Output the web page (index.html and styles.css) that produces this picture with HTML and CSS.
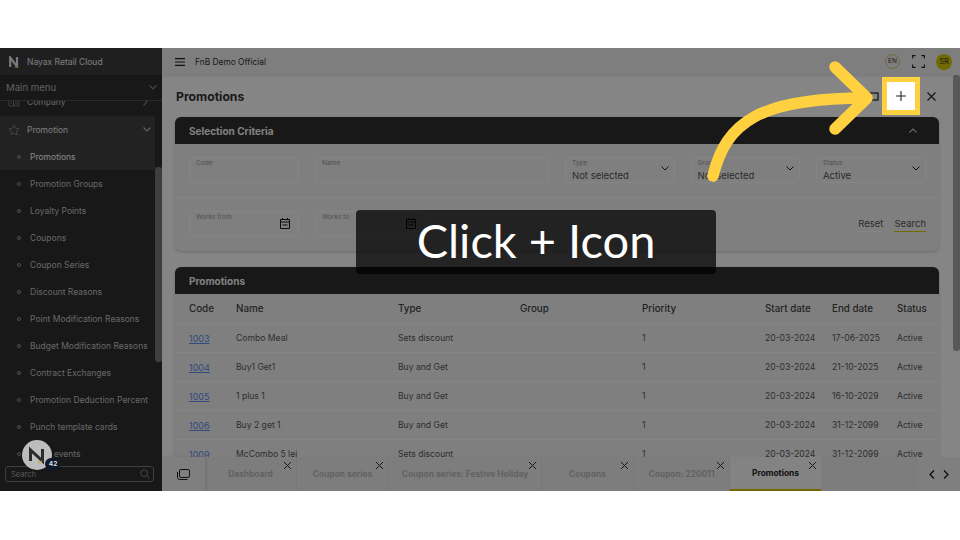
FILE: index.html
```html
<!DOCTYPE html>
<html>
<head>
    <meta charset="UTF-8">
    <title>Promotions</title>
    <link rel="stylesheet" href="styles.css">
</head>
<body>
    <div class="app">
        <!-- sidebar -->
        <aside class="sidebar">
            <div class="brand">
                <svg class="brand-logo" width="10" height="12" viewBox="0 0 10 12"><path d="M1.200 11V1.500L8 10.500V1" fill="none" stroke="#e8e8e8" stroke-width="2.200"/><path d="M5.500 11.300h4" stroke="#d8b82c" stroke-width="1.200"/></svg>
                <span>Nayax Retail Cloud</span>
            </div>
            <div class="menu-head">
                <span>Main menu</span>
                <svg width="8" height="5" viewBox="0 0 8 5"><path d="M.5.500L4 4 7.500.500" fill="none" stroke="#888" stroke-width="1.100"/></svg>
            </div>
            <div class="menu-scroll">
                <div class="menu-item cut">
                    <svg width="12" height="10" viewBox="0 0 12 10"><path d="M1 1h4.500v8H1zM5.500 3H11v6H5.500zM2.500 3.500h1.500M2.500 6h1.500M7 5h2.500M7 7h2.500" fill="none" stroke="#888" stroke-width=".8"/></svg>
                    <span class="grow">Company</span>
                    <svg width="5" height="8" viewBox="0 0 5 8"><path d="M.5.500L4 4 .5 7.500" fill="none" stroke="#888" stroke-width="1.100"/></svg>
                </div>
                <div class="menu-group">
                    <div class="menu-item open">
                        <svg width="12" height="12" viewBox="0 0 13 13"><path d="M6.500 1l1.700 3.600 3.800.5-2.800 2.700.7 3.900-3.400-1.900-3.400 1.900.7-3.900L1 5.100l3.800-.5z" fill="none" stroke="#999" stroke-width=".8"/></svg>
                        <span class="grow">Promotion</span>
                        <svg width="8" height="5" viewBox="0 0 8 5"><path d="M.5.500L4 4 7.500.500" fill="none" stroke="#bbb" stroke-width="1.100"/></svg>
                    </div>
                    <a class="sub active">Promotions</a>
                </div>
                <a class="sub">Promotion Groups</a>
                <a class="sub">Loyalty Points</a>
                <a class="sub">Coupons</a>
                <a class="sub">Coupon Series</a>
                <a class="sub">Discount Reasons</a>
                <a class="sub">Point Modification Reasons</a>
                <a class="sub">Budget Modification Reasons</a>
                <a class="sub">Contract Exchanges</a>
                <a class="sub">Promotion Deduction Percent</a>
                <a class="sub">Punch template cards</a>
                <a class="sub">Profit events</a>
            </div>
            <div class="side-search">
                <div class="search-box">
                    <span>Search</span>
                    <svg width="10" height="10" viewBox="0 0 12 12"><circle cx="5" cy="5" r="4" fill="none" stroke="#999"/><path d="M8 8l3.500 3.500" stroke="#999"/></svg>
                </div>
            </div>
            <div class="side-thumb"></div>
        </aside>

        <div class="main">
            <!-- top bar -->
            <header class="topbar">
                <svg class="burger" width="10" height="8" viewBox="0 0 10 8"><path d="M0 .6h10M0 4h10M0 7.400h10" stroke="#222" stroke-width="1.100"/></svg>
                <span class="grow">FnB Demo Official</span>
                <span class="lang">EN</span>
                <svg class="fullscreen" width="13" height="13" viewBox="0 0 13 13"><path d="M.6 3.500V.6h3M9.400.6h3v2.900M12.400 9.500v2.900h-3M3.600 12.400h-3V9.500" fill="none" stroke="#222" stroke-width="1.100"/></svg>
                <span class="avatar">SR</span>
            </header>

            <div class="page">
                <div class="content">
                    <div class="title-row">
                        <h1>Promotions</h1>
                        <svg class="title-icon" width="10" height="9" viewBox="0 0 10 9"><rect x="1" y="1" width="8" height="7" fill="none" stroke="#222" stroke-width="1.200"/></svg>
                        <svg class="close" width="9" height="9" viewBox="0 0 9 9"><path d="M.5.500l8 8M8.500.500l-8 8" stroke="#222" stroke-width="1.100"/></svg>
                    </div>

                    <section class="card criteria">
                        <div class="card-head">
                            <span>Selection Criteria</span>
                            <svg width="8" height="5" viewBox="0 0 8 5"><path d="M.5 4.500L4 1l3.500 3.500" fill="none" stroke="#ccc" stroke-width="1.100"/></svg>
                        </div>
                        <div class="filter-row">
                            <div class="field w-code"><label>Code</label></div>
                            <div class="field w-name"><label>Name</label></div>
                            <div class="field w-sel"><label>Type</label><b>Not selected</b><svg width="8" height="5" viewBox="0 0 8 5"><path d="M.5.500L4 4 7.500.500" fill="none" stroke="#222"/></svg></div>
                            <div class="field w-sel"><label>Group</label><b>Not selected</b><svg width="8" height="5" viewBox="0 0 8 5"><path d="M.5.500L4 4 7.500.500" fill="none" stroke="#222"/></svg></div>
                            <div class="field w-sel"><label>Status</label><b>Active</b><svg width="8" height="5" viewBox="0 0 8 5"><path d="M.5.500L4 4 7.500.500" fill="none" stroke="#222"/></svg></div>
                        </div>
                        <div class="filter-row second">
                            <div class="field w-code"><label>Works from</label><svg class="cal" width="10" height="12" viewBox="0 0 10 12"><path d="M.5 2.500h9v9h-9zM.5 5h9M2.500 1v2M7.500 1v2M2.500 8h5" fill="none" stroke="#111"/></svg></div>
                            <div class="field w-code"><label>Works to</label><svg class="cal" width="10" height="12" viewBox="0 0 10 12"><path d="M.5 2.500h9v9h-9zM.5 5h9M2.500 1v2M7.500 1v2M2.500 8h5" fill="none" stroke="#111"/></svg></div>
                            <div class="actions">
                                <a>Reset</a>
                                <a class="on">Search</a>
                            </div>
                        </div>
                    </section>

                    <section class="card results">
                        <div class="card-head"><span>Promotions</span></div>
                        <table>
                            <thead>
                                <tr><th class="c-code">Code</th><th class="c-name">Name</th><th class="c-type">Type</th><th class="c-group">Group</th><th class="c-pri">Priority</th><th class="c-start">Start date</th><th class="c-end">End date</th><th>Status</th></tr>
                            </thead>
                            <tbody>
                                <tr><td><a>1003</a></td><td>Combo Meal</td><td>Sets discount</td><td></td><td>1</td><td>20-03-2024</td><td>17-06-2025</td><td>Active</td></tr>
                                <tr><td><a>1004</a></td><td>Buy1 Get1</td><td>Buy and Get</td><td></td><td>1</td><td>20-03-2024</td><td>21-10-2025</td><td>Active</td></tr>
                                <tr><td><a>1005</a></td><td>1 plus 1</td><td>Buy and Get</td><td></td><td>1</td><td>20-03-2024</td><td>16-10-2029</td><td>Active</td></tr>
                                <tr><td><a>1006</a></td><td>Buy 2 get 1</td><td>Buy and Get</td><td></td><td>1</td><td>20-03-2024</td><td>31-12-2099</td><td>Active</td></tr>
                                <tr><td><a>1009</a></td><td>McCombo 5 lei</td><td>Sets discount</td><td></td><td>1</td><td>20-03-2024</td><td>31-12-2099</td><td>Active</td></tr>
                            </tbody>
                        </table>
                    </section>
                </div>
                <div class="page-scroll"><div class="page-thumb"></div></div>
            </div>

            <!-- open tabs -->
            <footer class="tabs">
                <div class="tabs-icon">
                    <svg width="13" height="11" viewBox="0 0 13 11"><rect x="2.500" y=".5" width="10" height="8" rx="1.500" fill="none" stroke="#222"/><path d="M.5 3v5.500a2 2 0 0 0 2 2h8" fill="none" stroke="#222"/></svg>
                </div>
                <div class="tab t1">Dashboard<i></i></div>
                <div class="tab t2">Coupon series<i></i></div>
                <div class="tab t3">Coupon series: Festive Holiday<i></i></div>
                <div class="tab t4">Coupons<i></i></div>
                <div class="tab t5">Coupon: 220011<i></i></div>
                <div class="tab t6 current">Promotions<i></i></div>
                <div class="tabs-space"></div>
                <div class="tabs-nav">
                    <svg width="6" height="9" viewBox="0 0 6 9"><path d="M5 .5l-4 4 4 4" fill="none" stroke="#111" stroke-width="1.200"/></svg>
                    <svg width="6" height="9" viewBox="0 0 6 9"><path d="M1 .5l4 4-4 4" fill="none" stroke="#111" stroke-width="1.200"/></svg>
                </div>
            </footer>
        </div>
    </div>

    <!-- walkthrough overlay -->
    <div class="dim"></div>
    <div class="help-bubble">
        <svg width="20" height="20" viewBox="0 0 20 20"><path d="M3.500 16V5l12 11V4" fill="none" stroke="#2b2b2b" stroke-width="3"/><path d="M11 18l4-2" stroke="#c9a92c" stroke-width="1.300"/></svg>
        <span class="help-count">42</span>
    </div>
    <div class="spot">
        <svg width="10" height="10" viewBox="0 0 10 10"><path d="M5 0v10M0 5h10" stroke="#222" stroke-width="1.100"/></svg>
    </div>
    <div class="caption">Click + Icon</div>
    <svg class="arrow" width="960" height="540" viewBox="0 0 960 540">
        <path d="M713 176C726 122 760 98 866 98M835 67l32 31-32 31" fill="none" stroke="#ffd040" stroke-width="11.500" stroke-linecap="round" stroke-linejoin="round"/>
    </svg>
</body>
</html>
```

FILE: styles.css
```css
/* page frame */
body {
    margin: 0;
    width: 960px;
    height: 540px;
    background: #fff;
    overflow: hidden;
    font-family: Inter, Roboto, "Liberation Sans", sans-serif;
    color: #333;
}

.grow {
    flex: 1;
}

.app {
    display: flex;
    width: 960px;
    height: 443px;
    margin-top: 48px;
    overflow: hidden;
    background: #fff;
}

/* sidebar */
.sidebar {
    position: relative;
    display: flex;
    flex-direction: column;
    flex: none;
    width: 162px;
    background: #2e2e2e;
    color: #c6c6c6;
    font-size: 8.500px;
}

.brand {
    display: flex;
    align-items: center;
    gap: 8px;
    flex: none;
    height: 27px;
    padding-left: 9px;
    background: #3c3c3c;
    color: #eee;
}

.menu-head {
    display: flex;
    align-items: center;
    justify-content: space-between;
    flex: none;
    height: 26px;
    padding: 0 5px 0 6px;
    border-bottom: 1px solid #555;
    box-sizing: border-box;
    font-size: 9.600px;
    color: #bbb;
    background: #2e2e2e;
}

.menu-scroll {
    flex: 1;
    min-height: 0;
    overflow: hidden;
}

.menu-item {
    display: flex;
    align-items: center;
    gap: 7px;
    height: 27px;
    padding: 0 4px 0 8px;
}

.menu-item.cut {
    height: 10px;
    margin-top: -4px;
    margin-bottom: 9px;
    padding-right: 14px;
}

.menu-group {
    width: 155px;
    background: #414141;
}

.open {
    color: #eee;
}

.sub {
    display: flex;
    align-items: center;
    height: 27px;
    padding-left: 30px;
    position: relative;
    white-space: nowrap;
}

.sub::before {
    content: "";
    position: absolute;
    left: 17px;
    top: 12px;
    width: 4px;
    height: 4px;
    border: 1px solid #999;
    border-radius: 50%;
    box-sizing: border-box;
}

.sub.active {
    color: #fff;
}

.side-search {
    flex: none;
    height: 27px;
    padding: 2px 0 0 5px;
    box-sizing: border-box;
}

.search-box {
    display: flex;
    align-items: center;
    justify-content: space-between;
    width: 149px;
    height: 16px;
    box-sizing: border-box;
    padding: 0 3px 0 5px;
    border: 1px solid #777;
    border-radius: 3px;
    font-size: 7.500px;
    color: #aaa;
}

.side-thumb {
    position: absolute;
    left: 155px;
    top: 119px;
    width: 7px;
    height: 195px;
    background: #777;
    border-radius: 3px;
}

/* main */
.main {
    display: flex;
    flex-direction: column;
    flex: 1;
    min-width: 0;
    background: #fff;
}

.topbar {
    display: flex;
    align-items: center;
    flex: none;
    height: 27px;
    padding: 0 8px 0 13px;
    background: #f2f2f2;
    font-size: 8.400px;
    box-shadow: 0 1px 2px rgba(0,0,0,.1);
    position: relative;
}

.burger {
    margin-right: 10px;
}

.lang {
    width: 15px;
    height: 15px;
    line-height: 13px;
    box-sizing: border-box;
    border: 1px solid #cfc86a;
    border-radius: 50%;
    font-size: 6.500px;
    text-align: center;
}

.fullscreen {
    margin: 0 11px 0 12px;
}

.avatar {
    width: 16px;
    height: 16px;
    line-height: 16px;
    background: #d9cb00;
    border-radius: 50%;
    font-size: 7.500px;
    text-align: center;
}

.page {
    display: flex;
    flex: 1;
    min-height: 0;
    overflow: hidden;
}

.content {
    flex: 1;
    min-width: 0;
    padding: 0 13px;
}

.title-row {
    display: flex;
    align-items: center;
    height: 42px;
}

.title-row h1 {
    flex: 1;
    margin: 0 0 0 1px;
    font-size: 12.200px;
    font-weight: 700;
}

.title-icon {
    margin-right: 48px;
}

.close {
    margin-right: 3px;
}

/* cards */
.card {
    background: #f3f3f3;
    border-radius: 6px;
    box-shadow: 0 1px 3px rgba(0,0,0,.2);
}

.card-head {
    display: flex;
    align-items: center;
    justify-content: space-between;
    height: 27px;
    padding: 0 22px 0 14px;
    background: #2e2e2e;
    border-radius: 6px 6px 0 0;
    color: #f5f5f5;
    font-size: 10px;
    font-weight: 700;
}

.criteria {
    height: 134px;
}

.filter-row {
    display: flex;
    gap: 16px;
    height: 54px;
    padding: 13px 13px 0 14px;
    box-sizing: border-box;
    border-bottom: 1px solid #fff;
}

.filter-row.second {
    border-bottom: 0;
}

.field {
    position: relative;
    flex: none;
    height: 26px;
    box-sizing: border-box;
    padding: 1px 6px;
    border: 1px solid #fff;
    border-radius: 4px;
}

.field label {
    display: block;
    margin-bottom: 3px;
    font-size: 6.500px;
    line-height: 8px;
    color: #999;
}

.field b {
    display: block;
    font-weight: 400;
    font-size: 9.500px;
    line-height: 11px;
    color: #555;
}

.field > svg {
    position: absolute;
    right: 5px;
    top: 8px;
}

.field > svg.cal {
    right: 8px;
    top: 5px;
}

.w-code {
    width: 110px;
}

.w-name {
    width: 234px;
}

.w-sel {
    width: 109.500px;
}

.actions {
    display: flex;
    gap: 11px;
    margin-left: auto;
    font-size: 9.500px;
    padding-top: 7px;
    color: #555;
}

.actions a {
    height: 13px;
    border-bottom: 1px solid #fff;
}

.actions a.on {
    border-bottom-color: #d9cb00;
}

.results {
    margin-top: 16px;
}

/* table */
table {
    width: 100%;
    border-collapse: collapse;
    table-layout: fixed;
    font-size: 8.600px;
}

th {
    height: 29px;
    padding: 0 0 0 14px;
    text-align: left;
    font-weight: 500;
    font-size: 9.800px;
    color: #444;
    white-space: nowrap;
}

td {
    height: 28px;
    padding: 0 0 0 14px;
    border-top: 1px solid #fff;
    color: #5a5a5a;
    white-space: nowrap;
}

td a {
    color: #5f8ef0;
    text-decoration: underline;
    font-size: 9px;
}

.c-code {
    width: 33px;
}

.c-name {
    width: 148px;
}

.c-type,
.c-group {
    width: 108px;
}

.c-pri {
    width: 109px;
}

.c-start {
    width: 53px;
}

.c-end {
    width: 51px;
}

.page-scroll {
    flex: none;
    width: 8px;
}

.page-thumb {
    width: 7px;
    height: 276px;
    margin-left: 1px;
    background: #aaa;
    border-radius: 3px;
}

/* tabs */
.tabs {
    display: flex;
    flex: none;
    height: 34px;
    margin-top: -34px;
    position: relative;
    background: #efefef;
    font-size: 8.400px;
    font-weight: 700;
    color: #bbb;
}

.tabs-icon {
    display: flex;
    align-items: center;
    justify-content: center;
    flex: none;
    width: 43px;
    background: #f4f4f4;
    box-shadow: 1px 0 3px rgba(0,0,0,.12);
}

.tab {
    position: relative;
    display: flex;
    align-items: center;
    justify-content: center;
    flex: none;
    height: 34px;
    box-sizing: border-box;
    border-right: 1px solid #e6e6e6;
}

.tab i {
    position: absolute;
    top: 5px;
    right: 5px;
    width: 7px;
    height: 7px;
    background:
        linear-gradient(45deg, transparent 44%, #333 44%, #333 56%, transparent 56%),
        linear-gradient(-45deg, transparent 44%, #333 44%, #333 56%, transparent 56%);
}

.t1 { width: 92px; }
.t2 { width: 92px; }
.t3 { width: 153px; }
.t4 { width: 92px; }
.t5 { width: 96px; }
.t6 { width: 91px; }

.tab.current {
    background: #fbfbfb;
    color: #222;
    border-right: 0;
    border-bottom: 2px solid #d9cb00;
}

.tabs-space {
    flex: 1;
}

.tabs-nav {
    display: flex;
    align-items: center;
    justify-content: center;
    gap: 8px;
    flex: none;
    width: 43px;
    background: #f4f4f4;
}

/* walkthrough overlay */
.dim {
    position: absolute;
    left: 0;
    top: 48px;
    width: 960px;
    height: 443px;
    background: rgba(0,0,0,.48);
}

.help-bubble {
    position: absolute;
    left: 22px;
    top: 440px;
    display: flex;
    align-items: center;
    justify-content: center;
    width: 30px;
    height: 30px;
    background: #bdbdbd;
    border-radius: 50%;
}

.help-count {
    position: absolute;
    left: 23px;
    top: 18px;
    width: 16px;
    height: 12px;
    line-height: 12px;
    background: #0e1a2c;
    border-radius: 6px;
    color: #ddd;
    font-size: 6.500px;
    font-weight: 700;
    text-align: center;
}

.spot {
    position: absolute;
    left: 882px;
    top: 77px;
    display: flex;
    align-items: center;
    justify-content: center;
    width: 28px;
    height: 28px;
    background: #fff;
    border: 5px solid #ffd040;
}

.caption {
    position: absolute;
    left: 356px;
    top: 210px;
    width: 360px;
    height: 64px;
    line-height: 60px;
    background: rgba(0,0,0,.73);
    border-radius: 4px;
    color: #fff;
    font-family: Lato, sans-serif;
    font-size: 47px;
    text-align: center;
}

.arrow {
    position: absolute;
    left: 0;
    top: 0;
}
```
